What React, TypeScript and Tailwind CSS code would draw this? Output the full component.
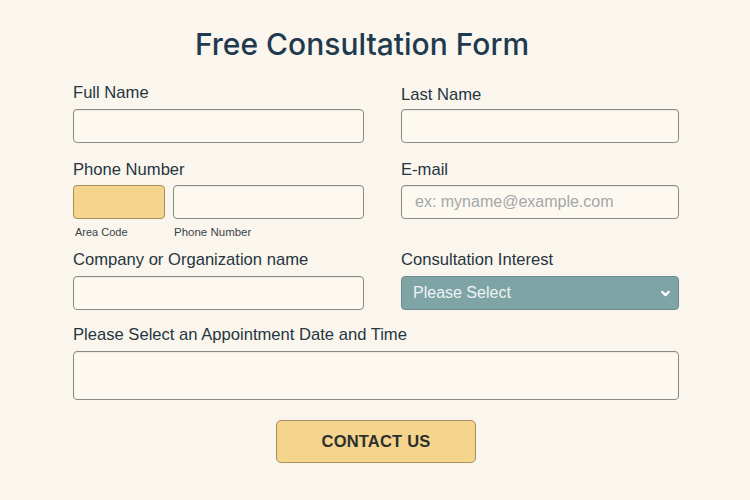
import React from 'react';

const font = { fontFamily: '"Liberation Sans", Arial, sans-serif' };

const Label: React.FC<{ children: React.ReactNode; className?: string }> = ({ children, className = '' }) => (
  <label className={`block text-[16.6px] leading-[20px] text-[#26353f] ${className}`}>{children}</label>
);

const boxClass =
  'block w-full rounded-[4px] border-[1.5px] border-[#8a8a86] bg-[#fdf9f1] shadow-[inset_0_1px_1px_rgba(0,0,0,0.06)]';

const App: React.FC = () => {
  return (
    <div className="min-h-screen w-[750px] h-[500px] bg-[#faf6ed]" style={font}>
      <h1
        className="pt-[25px] pr-[26px] text-center text-[30px] leading-[38px] font-medium text-[#1f3a4f]"
        style={{ fontFamily: 'Inter, "Liberation Sans", sans-serif' }}
      >
        Free Consultation Form
      </h1>

      <form className="ml-[73px] w-[606px] mt-[20px]" onSubmit={e => e.preventDefault()}>
        <div className="grid grid-cols-[291px_278px] gap-x-[37px]">
          {/* row 1 */}
          <div>
            <Label className="mb-[6px]">Full Name</Label>
            <input className={`${boxClass} h-[34px]`} />
          </div>
          <div>
            <Label className="mb-[4px] pt-[2px]">Last Name</Label>
            <input className={`${boxClass} h-[34px]`} />
          </div>

          {/* row 2 */}
          <div className="mt-[17px]">
            <Label className="mb-[5px]">Phone Number</Label>
            <div className="flex gap-[8px]">
              <div className="w-[92px]">
                <input className="block w-full h-[34px] rounded-[4px] border-[1.5px] border-[#a88e5c] bg-[#f5d58e]" />
                <span className="block mt-[6px] pl-[2px] text-[11px] leading-[15px] text-[#3a4248]">Area Code</span>
              </div>
              <div className="flex-1">
                <input className={`${boxClass} h-[34px]`} />
                <span className="block mt-[6px] pl-[1px] text-[11.5px] leading-[15px] text-[#3a4248]">Phone Number</span>
              </div>
            </div>
          </div>
          <div className="mt-[17px]">
            <Label className="mb-[5px]">E-mail</Label>
            <input
              className={`${boxClass} h-[34px] px-[13px] text-[16px] text-[#333] placeholder:text-[#a3a7a8]`}
              placeholder="ex: myname@example.com"
            />
          </div>

          {/* row 3 */}
          <div className="mt-[10px]">
            <Label className="mb-[6px]">Company or Organization name</Label>
            <input className={`${boxClass} h-[34px]`} />
          </div>
          <div className="mt-[10px]">
            <Label className="mb-[6px]">Consultation Interest</Label>
            <div className="flex h-[34px] items-center justify-between rounded-[4px] border-[1.5px] border-[#6c8d8f] bg-[#7ea4a6] pl-[11px] pr-[6px]">
              <span className="text-[16px] text-[#eef4f4]">Please Select</span>
              <svg width="13" height="13" viewBox="0 0 24 24" fill="none" stroke="#ffffff" strokeWidth="4" strokeLinecap="round" strokeLinejoin="round">
                <path d="M6 9l6 6 6-6" />
              </svg>
            </div>
          </div>
        </div>

        {/* row 4 */}
        <div className="mt-[15px]">
          <Label className="mb-[6px]">Please Select an Appointment Date and Time</Label>
          <div className={`${boxClass} h-[49px]`} />
        </div>

        <div className="mt-[20px] flex justify-center">
          <button
            type="submit"
            className="h-[43px] w-[200px] rounded-[5px] border-[1.5px] border-[#a88e5c] bg-[#f5d58e] text-[16.5px] font-bold text-[#2c302b] tracking-[0.2px]"
          >
            CONTACT US
          </button>
        </div>
      </form>
    </div>
  );
};

export default App;
